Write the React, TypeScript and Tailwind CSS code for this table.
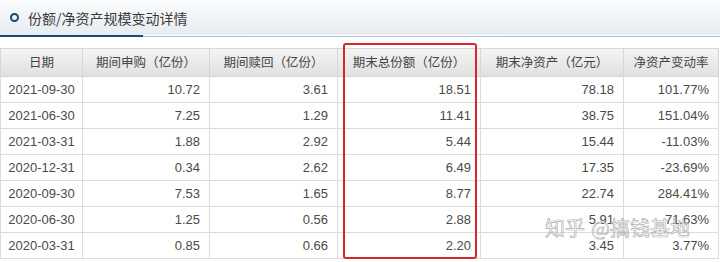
const rows = [
  ['2021-09-30', '10.72', '3.61', '18.51', '78.18', '101.77%'],
  ['2021-06-30', '7.25', '1.29', '11.41', '38.75', '151.04%'],
  ['2021-03-31', '1.88', '2.92', '5.44', '15.44', '-11.03%'],
  ['2020-12-31', '0.34', '2.62', '6.49', '17.35', '-23.69%'],
  ['2020-09-30', '7.53', '1.65', '8.77', '22.74', '284.41%'],
  ['2020-06-30', '1.25', '0.56', '2.88', '5.91', '71.63%'],
  ['2020-03-31', '0.85', '0.66', '2.20', '3.45', '3.77%'],
];

const headers = ['日期', '期间申购（亿份）', '期间赎回（亿份）', '期末总份额（亿份）', '期末净资产（亿元）', '净资产变动率'];
const widths = ['w-[82px]', 'w-[127px]', 'w-[128px]', 'w-[143px]', 'w-[143px]', 'w-[95px]'];

export default function App() {
  return (
    <div className="w-[720px] h-[262px] overflow-hidden bg-white font-['Liberation_Sans','Noto_Sans_CJK_SC',sans-serif]">
      {/* 标题栏 */}
      <div className="h-[35px] flex items-center pl-[10px] bg-gradient-to-b from-[#fbfcfd] to-[#e6ecf1]">
        <span className="w-[9px] h-[9px] rounded-full border-2 border-[#1d4a6b]" />
        <span className="ml-[9px] text-[14px] text-[#3a3a3a] font-['Noto_Sans_CJK_SC',sans-serif] pt-[1px]">份额/净资产规模变动详情</span>
      </div>
      <div className="flex items-end h-[2px]">
        <div className="w-[143px] h-[2px] bg-[#1d4a6b]" />
        <div className="flex-1 h-px bg-[#aebfcd]" />
      </div>

      <div className="relative mt-[11px]">
        <table className="table-fixed border-collapse w-[718px]">
          <thead>
            <tr className="h-[28px] bg-gradient-to-b from-[#f4f4f4] to-[#e0e0e0]">
              {headers.map((h, i) => (
                <th
                  key={h}
                  className={`${widths[i]} border border-[#d6d6d6] p-0 text-center font-normal text-[12.5px] text-[#444] font-['Noto_Sans_CJK_SC',sans-serif] whitespace-nowrap`}
                >
                  {h}
                </th>
              ))}
            </tr>
          </thead>
          <tbody>
            {rows.map((r) => (
              <tr key={r[0]} className="h-[26px]">
                {r.map((c, i) => (
                  <td
                    key={i}
                    className={
                      i === 0
                        ? 'border border-[#dcdcdc] p-0 text-center text-[13px] text-[#4a4a4a]'
                        : 'border border-[#dcdcdc] p-0 pr-[9px] text-right text-[13px] text-[#4a4a4a]'
                    }
                  >
                    {c}
                  </td>
                ))}
              </tr>
            ))}
          </tbody>
        </table>

        {/* 红框标注 */}
        <div className="absolute left-[343px] top-[-5px] w-[134px] h-[216px] border-2 border-[#d8262c] rounded-[3px]" />

        {/* 水印 */}
        <div className="absolute left-[545px] top-[170px] flex items-baseline gap-[6px] text-[20px] leading-none text-white/55 font-['Noto_Sans_CJK_SC',sans-serif] [-webkit-text-stroke:0.7px_rgba(120,120,120,0.6)]">
          <span>知乎</span>
          <span>@搞钱基地</span>
        </div>
      </div>
    </div>
  );
}
